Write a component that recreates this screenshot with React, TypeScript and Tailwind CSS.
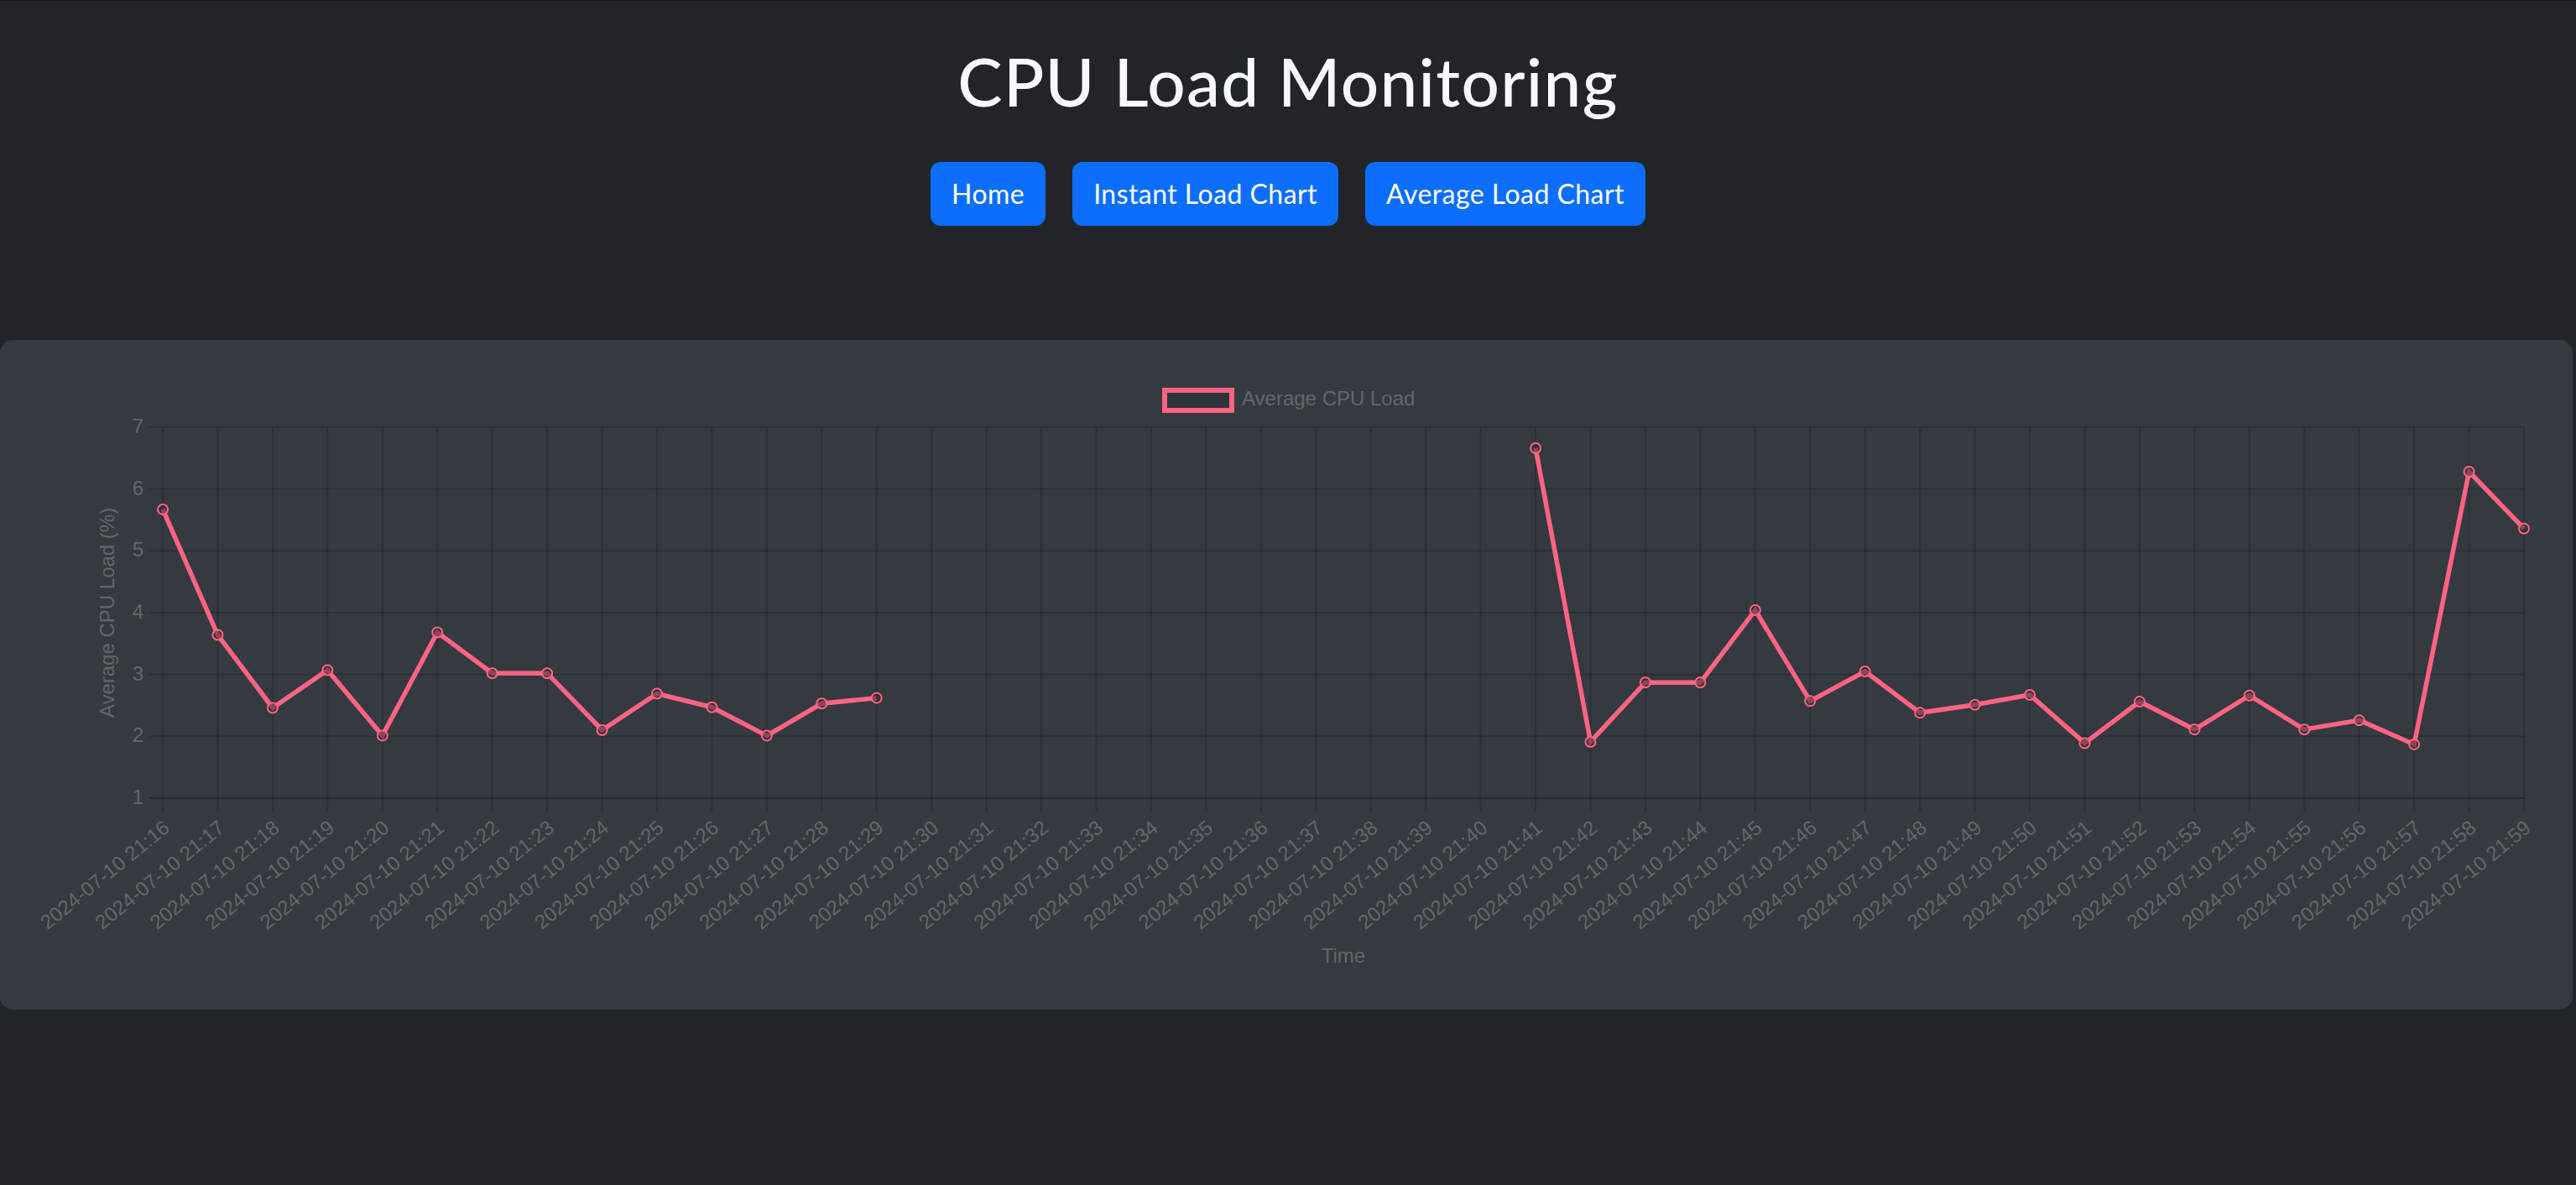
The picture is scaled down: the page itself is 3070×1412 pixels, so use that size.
import React from "react";

const vals: (number | null)[] = [
  5.67, 3.64, 2.46, 3.07, 2.01, 3.68, 3.02, 3.02, 2.1, 2.69, 2.47, 2.01, 2.53, 2.62,
  null, null, null, null, null, null, null, null, null, null, null,
  6.66, 1.91, 2.87, 2.87, 4.04, 2.57, 3.05, 2.38, 2.51, 2.67, 1.89, 2.56, 2.11, 2.66,
  2.11, 2.26, 1.87, 6.28, 5.36,
];

const X0 = 194;
const X1 = 3008;
const TOP = 104;
const BOTTOM = 546;
const N = vals.length;
const dx = (X1 - X0) / (N - 1);
const xOf = (i: number) => X0 + i * dx;
const yOf = (v: number) => TOP + ((7 - v) * (BOTTOM - TOP)) / 6;
const PINK = "#ff6384";
const GRID = "rgba(0,0,0,0.16)";
const TXT = "#666666";
const FONT = "'Liberation Sans', Arial, sans-serif";

function segments() {
  const segs: { x: number; y: number }[][] = [];
  let cur: { x: number; y: number }[] = [];
  vals.forEach((v, i) => {
    if (v === null) {
      if (cur.length) segs.push(cur);
      cur = [];
    } else {
      cur.push({ x: xOf(i), y: yOf(v) });
    }
  });
  if (cur.length) segs.push(cur);
  return segs;
}

function Chart() {
  const segs = segments();
  return (
    <svg width={3066} height={798} viewBox="0 0 3066 798" className="block">
      {/* legend */}
      <rect x={1388} y={60} width={80} height={24} fill="rgba(0,0,0,0.1)" stroke={PINK} strokeWidth={6} />
      <text x={1480} y={78} fontFamily={FONT} fontSize={24} fill={TXT}>
        Average CPU Load
      </text>

      {/* horizontal grid */}
      {[7, 6, 5, 4, 3, 2, 1].map((v) => (
        <g key={v}>
          <line x1={178} x2={X1} y1={yOf(v)} y2={yOf(v)} stroke={v === 1 ? "rgba(0,0,0,0.22)" : GRID} strokeWidth={2} />
          <text x={171} y={yOf(v) + 7} textAnchor="end" fontFamily={FONT} fontSize={24} fill={TXT}>
            {v}
          </text>
        </g>
      ))}

      {/* vertical grid */}
      {vals.map((_, i) => (
        <line key={i} x1={xOf(i)} x2={xOf(i)} y1={TOP} y2={BOTTOM + 16} stroke={GRID} strokeWidth={2} />
      ))}

      {/* y title */}
      <text
        transform={`translate(127 ${(TOP + BOTTOM) / 2}) rotate(-90)`}
        textAnchor="middle"
        dominantBaseline="central"
        fontFamily={FONT}
        fontSize={24}
        fill={TXT}
      >
        Average CPU Load (%)
      </text>

      {/* x labels */}
      {vals.map((_, i) => (
        <text
          key={i}
          transform={`translate(${xOf(i) - 1} 571) rotate(-39)`}
          textAnchor="end"
          dy={17}
          fontFamily={FONT}
          fontSize={24}
          fill={TXT}
        >
          {`2024-07-10 21:${16 + i}`}
        </text>
      ))}

      {/* x title */}
      <text x={(X0 + X1) / 2} y={742} textAnchor="middle" fontFamily={FONT} fontSize={24} fill={TXT}>
        Time
      </text>

      {/* line */}
      {segs.map((s, k) => (
        <polyline
          key={k}
          points={s.map((p) => `${p.x},${p.y}`).join(" ")}
          fill="none"
          stroke={PINK}
          strokeWidth={5.5}
          strokeLinejoin="miter"
        />
      ))}

      {/* points */}
      {vals.map((v, i) =>
        v === null ? null : (
          <circle key={i} cx={xOf(i)} cy={yOf(v)} r={6} fill="rgba(52,46,54,0.55)" stroke={PINK} strokeWidth={2} />
        )
      )}
    </svg>
  );
}

export default function App() {
  return (
    <div className="min-h-screen bg-[#212529] border-t border-[#141619]" style={{ fontFamily: "Lato, 'Noto Sans', sans-serif" }}>
      <h1 className="pt-[47px] text-center text-[80px] leading-[96px] font-medium text-[#f8f9fa] tracking-[1.3px]">
        CPU Load Monitoring
      </h1>
      <div className="mt-[49px] flex justify-center">
        <button className="mx-4 rounded-[12px] border-2 border-[#0d6efd] bg-[#0d6efd] px-[23px] py-[12px] text-[32px] leading-[48px] tracking-[0.45px] text-white">
          Home
        </button>
        <button className="mx-4 rounded-[12px] border-2 border-[#0d6efd] bg-[#0d6efd] px-[23px] py-[12px] text-[32px] leading-[48px] tracking-[0.45px] text-white">
          Instant Load Chart
        </button>
        <button className="mx-4 rounded-[12px] border-2 border-[#0d6efd] bg-[#0d6efd] px-[23px] py-[12px] text-[32px] leading-[48px] tracking-[0.45px] text-white">
          Average Load Chart
        </button>
      </div>
      <div className="mt-[136px] mr-[4px] overflow-hidden rounded-[16px] bg-[#343a40]">
        <Chart />
      </div>
    </div>
  );
}
